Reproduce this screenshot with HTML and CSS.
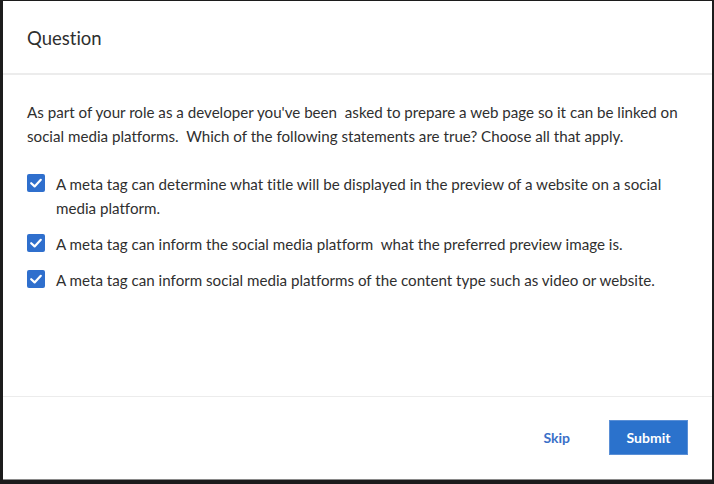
FILE: index.html
```html
<!DOCTYPE html>
<html lang="en">
<head>
<meta charset="utf-8">
<title>Question</title>
<link rel="stylesheet" href="styles.css">
</head>
<body>
<div class="dialog">
  <header class="dialog-header">
    <h1 class="dialog-title">Question</h1>
  </header>
  <main class="dialog-body">
    <p class="prompt">As part of your role as a developer you've been&nbsp; asked to prepare a web page so it can be linked on social media platforms.&nbsp; Which of the following statements are true? Choose all that apply.</p>
    <ul class="options">
      <li class="option">
        <span class="checkbox"><svg viewBox="0 0 18 18" width="18" height="18"><path d="M4.2 9.2 L7.6 12.4 L13.8 5.8" fill="none" stroke="#fff" stroke-width="2.2" stroke-linecap="round" stroke-linejoin="round"/></svg></span>
        <span class="option-text">A meta tag can determine what title will be displayed in the preview of a website on a social media platform.</span>
      </li>
      <li class="option">
        <span class="checkbox"><svg viewBox="0 0 18 18" width="18" height="18"><path d="M4.2 9.2 L7.6 12.4 L13.8 5.8" fill="none" stroke="#fff" stroke-width="2.2" stroke-linecap="round" stroke-linejoin="round"/></svg></span>
        <span class="option-text">A meta tag can inform the social media platform&nbsp; what the preferred preview image is.</span>
      </li>
      <li class="option">
        <span class="checkbox"><svg viewBox="0 0 18 18" width="18" height="18"><path d="M4.2 9.2 L7.6 12.4 L13.8 5.8" fill="none" stroke="#fff" stroke-width="2.2" stroke-linecap="round" stroke-linejoin="round"/></svg></span>
        <span class="option-text">A meta tag can inform social media platforms of the content type such as video or website.</span>
      </li>
    </ul>
  </main>
  <footer class="dialog-footer">
    <button class="btn-skip" type="button">Skip</button>
    <button class="btn-submit" type="button">Submit</button>
  </footer>
</div>
</body>
</html>
```
FILE: styles.css
```css
* { box-sizing: border-box; }
html, body { height: 100%; }
body {
  margin: 0;
  padding: 1px 2px 4px 3px;
  background: #1c1c1c;
  font-family: Lato, "Open Sans", "Liberation Sans", sans-serif;
  font-variant-ligatures: none;
  color: #2f2f2f;
}
.dialog {
  height: 100%;
  background: #fff;
  display: flex;
  flex-direction: column;
  border-bottom: 1px solid #8a8a8a;
}
.dialog-header {
  height: 74px;
  border-bottom: 2px solid #ececec;
  padding: 25px 24px 0;
}
.dialog-title {
  margin: 0;
  font-size: 18.5px;
  font-weight: 400;
  line-height: 24px;
  color: #2f2f2f;
}
.dialog-body {
  flex: 1;
  padding: 25px 24px 0;
}
.prompt {
  margin: 0 0 24px;
  font-size: 15.15px;
  line-height: 24px;
}
.options {
  list-style: none;
  margin: 0;
  padding: 0;
  display: flex;
  flex-direction: column;
  gap: 12px;
}
.option {
  display: flex;
  align-items: flex-start;
  gap: 11px;
  font-size: 15.15px;
  line-height: 24px;
}
.checkbox {
  flex: none;
  width: 18px;
  height: 18px;
  margin-top: 2px;
  background: #2f6fcd;
  border-radius: 2px;
  display: flex;
}
.dialog-footer {
  height: 83px;
  border-top: 1px solid #ececec;
  display: flex;
  align-items: center;
  justify-content: flex-end;
  padding: 0 24px 2px;
}
.btn-skip {
  font-family: inherit;
  font-size: 14px;
  font-weight: 700;
  color: #3a70c8;
  background: none;
  border: 0;
  padding: 0 16px;
  margin-right: 23px;
  height: 34px;
  cursor: pointer;
}
.btn-submit {
  font-family: inherit;
  font-size: 14px;
  font-weight: 700;
  color: #fff;
  background: #2b72cc;
  border: 1px solid #5a8fd6;
  width: 79px;
  height: 35px;
  padding: 0;
  cursor: pointer;
}
```
